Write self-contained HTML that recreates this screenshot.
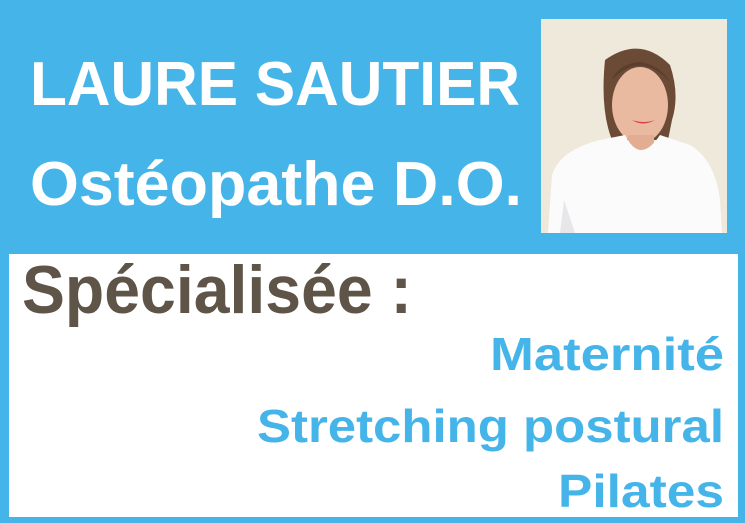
<!DOCTYPE html>
<html><head><meta charset="utf-8"><style>
html,body{margin:0;padding:0;background:#45b5e9;}
svg{display:block}
</style></head><body>
<svg width="745" height="523" viewBox="0 0 745 523" xmlns="http://www.w3.org/2000/svg">
<rect width="745" height="523" fill="#45b5e9"/>
<!-- photo -->
<rect x="541" y="19" width="186" height="214" fill="#ece6d6"/>
<rect x="541" y="19" width="186" height="214" fill="#f1ecdf" opacity="0.5"/>
<path d="M605 60 Q640 35 670 65 Q680 95 672 120 L668 140 L612 140 Q600 110 605 60Z" fill="#6b4a36"/>
<ellipse cx="640" cy="105" rx="28" ry="38" fill="#e9b9a0"/>
<path d="M612 80 Q640 50 670 82 Q660 65 640 62 Q618 64 612 80Z" fill="#5c3e2c"/>
<path d="M632 120 Q643 127 655 120 Q644 124 632 120Z" fill="#d8404a"/>
<rect x="628" y="135" width="26" height="25" fill="#e3ad94"/>
<path d="M548 233 L552 175 Q560 150 600 140 L625 135 Q640 165 660 135 L690 145 Q715 160 720 200 L722 233Z" fill="#fbfbfb"/>
<path d="M560 233 L564 200 L575 233Z" fill="#e7e7ea"/>
<!-- title -->
<text x="30" y="105" font-family="Liberation Sans, sans-serif" font-weight="bold" font-size="62" fill="#fff" textLength="490" lengthAdjust="spacingAndGlyphs">LAURE SAUTIER</text>
<text x="30" y="205" font-family="Liberation Sans, sans-serif" font-weight="bold" font-size="62" fill="#fff" textLength="492" lengthAdjust="spacingAndGlyphs">Ostéopathe D.O.</text>
<!-- white box -->
<rect x="9" y="254" width="729" height="263" fill="#fff"/>
<text x="22" y="313" font-family="Liberation Sans, sans-serif" font-weight="bold" font-size="68" fill="#5f5448" textLength="390" lengthAdjust="spacingAndGlyphs">Spécialisée :</text>
<text x="724" y="370" text-anchor="end" font-family="Liberation Sans, sans-serif" font-weight="bold" font-size="46" fill="#45b5e9" textLength="234" lengthAdjust="spacingAndGlyphs">Maternité</text>
<text x="724" y="442" text-anchor="end" font-family="Liberation Sans, sans-serif" font-weight="bold" font-size="46" fill="#45b5e9" textLength="467" lengthAdjust="spacingAndGlyphs">Stretching postural</text>
<text x="724" y="507" text-anchor="end" font-family="Liberation Sans, sans-serif" font-weight="bold" font-size="46" fill="#45b5e9" textLength="166" lengthAdjust="spacingAndGlyphs">Pilates</text>
</svg>
</body></html>
